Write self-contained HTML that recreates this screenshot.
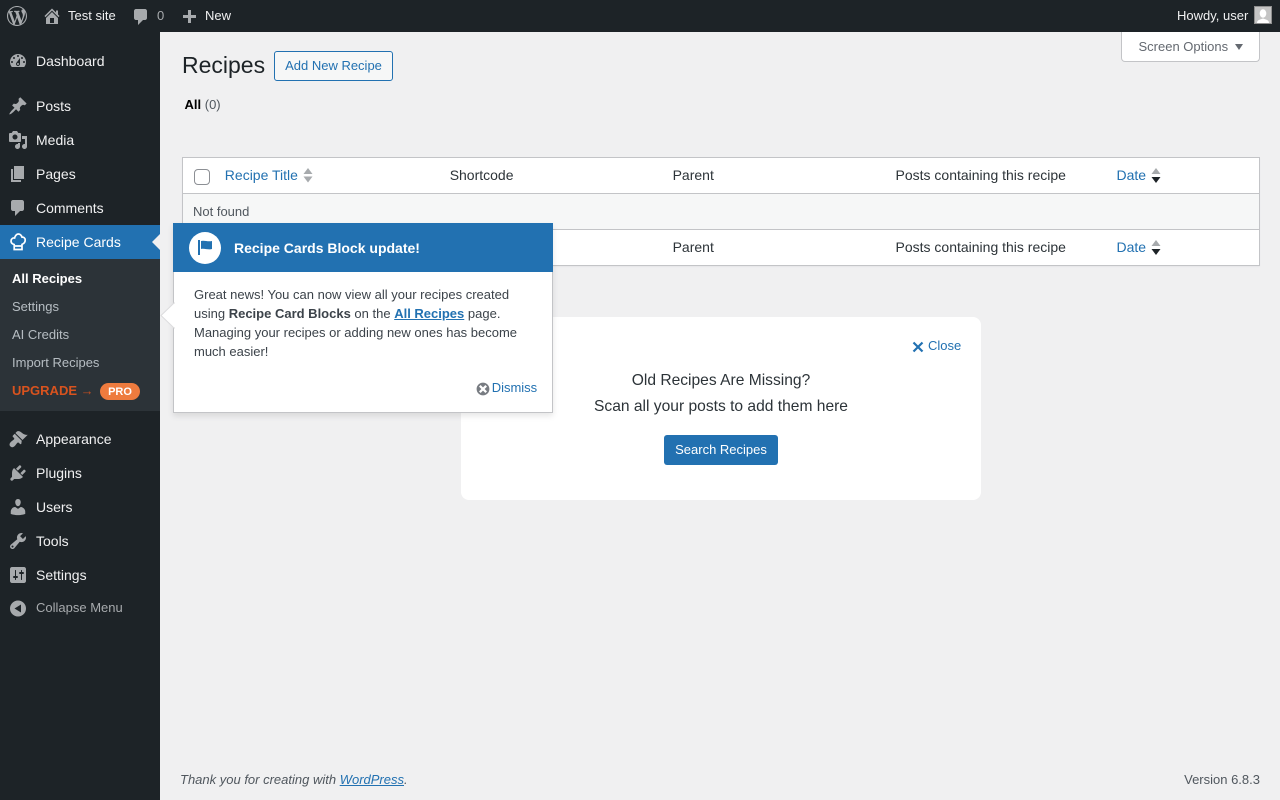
<!DOCTYPE html>
<html>
<head>
<meta charset="utf-8">
<title>Recipes</title>
<style>
html,body{margin:0;padding:0;width:1280px;height:800px;overflow:hidden;background:#f0f0f1;font-family:"Liberation Sans",sans-serif;font-size:13px;color:#3c434a}
*{box-sizing:border-box}
.a{position:absolute;white-space:nowrap}
a{color:#2271b1;text-decoration:none}
#bar{position:absolute;left:0;top:0;width:1280px;height:32px;background:#1d2327}
#side{position:absolute;left:0;top:32px;width:160px;height:768px;background:#1d2327}
.bt{font-size:13px;line-height:32px;top:0;color:#f0f0f1}
.m{font-size:14px;line-height:34px;height:34px;left:36px;color:#f0f0f1}
.s{font-size:13px;line-height:20px;left:12px;color:rgba(240,246,252,.7)}
svg{position:absolute;display:block}
.ic{fill:#a7aaad}
.th{font-size:14px;line-height:20px;color:#2c3338}
</style>
</head>
<body>
<div id="bar"></div>
<!-- WP logo -->
<svg style="left:7px;top:6px" width="20" height="20" viewBox="0 0 20 20"><path class="ic" d="M20 10c0-5.510-4.490-10-10-10C4.480 0 0 4.490 0 10c0 5.520 4.480 10 10 10 5.510 0 10-4.480 10-10zM7.780 15.370L4.370 6.220c.55-.02 1.170-.08 1.170-.08.5-.06.44-1.130-.06-1.110 0 0-1.450.11-2.370.11-.18 0-.37 0-.58-.01C4.120 2.690 6.890 1.050 10 1.050c2.320 0 4.430.87 6.030 2.340-.68-.11-1.650.39-1.650 1.580 0 .74.45 1.360.9 2.100.35.610.55 1.360.55 2.460 0 1.490-1.400 5-1.400 5l-3.030-8.370c.54-.02.82-.17.82-.17.5-.05.44-1.250-.06-1.220 0 0-1.440.12-2.380.12-.87 0-2.330-.12-2.330-.12-.5-.03-.56 1.200-.06 1.220l.92.080 1.260 3.410zM17.410 10c.24-.64.740-1.870.43-4.250.7 1.290 1.050 2.710 1.050 4.250 0 3.290-1.730 6.240-4.480 7.820.99-2.650 1.990-5.180 3-7.820zM6.100 18.090C3.120 16.650 1.110 13.530 1.110 10c0-1.300.23-2.480.72-3.590C3.250 10.300 4.670 14.200 6.100 18.090zm4.030-6.630l2.580 6.980c-.86.290-1.760.450-2.710.450-.79 0-1.570-.11-2.290-.33.810-2.360 1.630-4.720 2.420-7.100z"/></svg>
<!-- home -->
<svg style="left:42px;top:6px" width="20" height="20" viewBox="0 0 20 20"><path class="ic" d="M16 8.500l1.530 1.530-1.060 1.060L10 4.620l-6.470 6.470-1.060-1.060L10 2.500l4 4v-2h2v4zm-6-2.460l6 5.990V18H4v-5.970zM12 17v-5H8v5h4z"/></svg>
<div class="a bt" style="left:68px">Test site</div>
<!-- comment -->
<svg style="left:131px;top:7px" width="20" height="20" viewBox="0 0 20 20"><path class="ic" d="M5 2h9c1.100 0 2 .9 2 2v7c0 1.100-.9 2-2 2h-2l-5 5v-5H5c-1.100 0-2-.9-2-2V4c0-1.100.9-2 2-2z"/></svg>
<div class="a bt" style="left:157px;color:#a7aaad">0</div>
<!-- plus -->
<svg style="left:179px;top:8px" width="20" height="20" viewBox="0 0 20 20"><path class="ic" d="M17 7v3h-5v5H9v-5H4V7h5V2h3v5h5z"/></svg>
<div class="a bt" style="left:205px">New</div>
<div class="a bt" style="left:1177px">Howdy, user</div>
<div class="a" style="left:1254px;top:6px;width:18px;height:18px;background:#c4c4c4;border:1px solid #8f8f8f;overflow:hidden">
<svg style="left:0;top:0" width="16" height="16" viewBox="0 0 16 16"><ellipse cx="8" cy="6.500" rx="3.300" ry="4.200" fill="#fff"/><path d="M2 16c0-3 3-3.500 6-4.500 3 1 6 1.500 6 4.500z" fill="#fff"/></svg>
</div>

<div id="side"></div>
<div class="a" style="left:0;top:225px;width:160px;height:34px;background:#2271b1"></div>
<div class="a" style="left:152px;top:234px;width:0;height:0;border:8px solid transparent;border-left:0;border-right-color:#f0f0f1"></div>
<div class="a" style="left:0;top:259px;width:160px;height:152px;background:#2c3338"></div>

<!-- menu icons -->
<svg style="left:8px;top:51px" width="20" height="20" viewBox="0 0 20 20"><path class="ic" d="M3.760 16h12.480c1.100-1.370 1.760-3.110 1.760-5 0-4.420-3.580-8-8-8s-8 3.580-8 8c0 1.890.66 3.630 1.760 5zM10 4c.55 0 1 .45 1 1s-.45 1-1 1-1-.45-1-1 .45-1 1-1zM6 6c.55 0 1 .45 1 1s-.45 1-1 1-1-.45-1-1 .45-1 1-1zm8 0c.55 0 1 .45 1 1s-.45 1-1 1-1-.45-1-1 .45-1 1-1zm-5.370 5.550L12 7v6c0 1.100-.9 2-2 2s-2-.9-2-2c0-.57.24-1.080.63-1.450zM4 10c.55 0 1 .45 1 1s-.45 1-1 1-1-.45-1-1 .45-1 1-1zm12 0c.55 0 1 .45 1 1s-.45 1-1 1-1-.45-1-1 .45-1 1-1zm-5 3c0-.55-.45-1-1-1s-1 .45-1 1 .45 1 1 1 1-.45 1-1z"/></svg>
<div class="a m" style="top:44px">Dashboard</div>

<svg style="left:8px;top:96px" width="20" height="20" viewBox="0 0 20 20"><path class="ic" d="M10.440 3.020l1.820-1.820 6.360 6.350-1.830 1.820c-1.050-.68-2.480-.57-3.410.36l-.75.750c-.92.930-1.040 2.350-.35 3.400l-1.830 1.820-2.410-2.410-2.800 2.790c-.42.420-3.380 2.710-3.800 2.290s1.860-3.390 2.280-3.810l2.790-2.790L4.100 9.360l1.830-1.820c1.050.69 2.480.570 3.400-.36l.75-.75c.93-.92 1.050-2.350.36-3.410z"/></svg>
<div class="a m" style="top:89px">Posts</div>

<svg style="left:8px;top:130px" width="20" height="20" viewBox="0 0 20 20"><path class="ic" d="M13 11V4c0-.55-.45-1-1-1h-1.670L9 1H5L3.670 3H2c-.55 0-1 .45-1 1v7c0 .55.45 1 1 1h10c.55 0 1-.45 1-1zM7 4.500c1.380 0 2.500 1.120 2.500 2.500S8.380 9.500 7 9.500 4.500 8.380 4.500 7 5.620 4.500 7 4.500zM14 6h5v10.500c0 1.380-1.120 2.500-2.500 2.500S14 17.880 14 16.500s1.120-2.500 2.500-2.500c.17 0 .34.020.5.050V9h-3V6zm-4 8.050V13h2v3.500c0 1.380-1.120 2.500-2.500 2.500S7 17.880 7 16.500 8.120 14 9.500 14c.17 0 .34.020.5.050z"/></svg>
<div class="a m" style="top:123px">Media</div>

<svg style="left:8px;top:164px" width="20" height="20" viewBox="0 0 20 20"><path class="ic" d="M6 15V2h10v13H6zm-1 1h8v2H3V5h2v11z"/></svg>
<div class="a m" style="top:157px">Pages</div>

<svg style="left:8px;top:198px" width="20" height="20" viewBox="0 0 20 20"><path class="ic" d="M5 2h9c1.100 0 2 .9 2 2v7c0 1.100-.9 2-2 2h-2l-5 5v-5H5c-1.100 0-2-.9-2-2V4c0-1.100.9-2 2-2z"/></svg>
<div class="a m" style="top:191px">Comments</div>

<!-- chef hat -->
<svg style="left:8px;top:232px" width="20" height="20" viewBox="0 0 20 20"><path d="M6.200 12.600C3.900 11.800 2.700 10.300 3.100 8.400 3.500 6.600 5 5.700 6.600 6 7.100 3.800 8.600 2 10.200 2s3.100 1 3.800 3.200c1.700-.3 3.100.9 3.200 2.700.1 2-1.100 3.600-3.200 4.500V17.500H6.200zM6.200 14h7.800" fill="none" stroke="#fff" stroke-width="1.700"/></svg>
<div class="a m" style="top:225px;color:#fff">Recipe Cards</div>

<div class="a s" style="top:269px;color:#fff;font-weight:700">All Recipes</div>
<div class="a s" style="top:297px">Settings</div>
<div class="a s" style="top:325px">AI Credits</div>
<div class="a s" style="top:353px">Import Recipes</div>
<div class="a s" style="top:381px;color:#d9531e;font-weight:700">UPGRADE <span style="font-weight:400;opacity:.85">→</span></div>
<div class="a" style="left:100px;top:383px;width:40px;height:17px;border-radius:9px;background:#ee7b3e;color:#fff;font-size:11px;font-weight:700;line-height:18px;text-align:center">PRO</div>

<svg style="left:8px;top:429px" width="20" height="20" viewBox="0 0 20 20"><path class="ic" d="M14.480 11.060L7.410 3.990l1.500-1.500c.5-.56 2.300-.47 3.510.32 1.210.800 1.430 1.280 2.910 2.100 1.180.640 2.450 1.260 4.450.850zm-.71.710L6.700 4.700 4.930 6.470c-.39.390-.39 1.020 0 1.410l1.060 1.060c.39.390.39 1.030 0 1.420-.6.600-1.430 1.150-2.210 1.770-.59.470-1.150.980-1.590 1.620-.22.330-.41.680-.52 1.050-.12.380-.16.780-.1 1.180.05.280.16.530.3.760.14.230.31.450.51.650.2.2.42.370.65.510.23.140.48.250.76.300.4.060.8.020 1.180-.1.370-.11.720-.3 1.050-.52.640-.44 1.150-1 1.620-1.590.62-.78 1.170-1.610 1.770-2.210.39-.39 1.030-.39 1.420 0l1.060 1.060c.39.390 1.020.39 1.410 0z"/></svg>
<div class="a m" style="top:422px">Appearance</div>

<svg style="left:8px;top:463px" width="20" height="20" viewBox="0 0 20 20"><path class="ic" d="M13.110 4.360L9.870 7.600 8 5.730l3.240-3.240c.35-.34 1.050-.2 1.560.32.520.510.660 1.210.31 1.550zm-8 1.770l.91-1.120 9.010 9.010-1.190.84c-.71.710-2.630 1.160-3.820 1.160H6.140L4.900 17.260c-.59.590-1.540.590-2.120 0-.59-.580-.59-1.530 0-2.120l1.240-1.240v-3.880c0-1.130.4-3.190 1.090-3.890zm7.260 3.970l3.240-3.240c.34-.35 1.040-.21 1.550.31.520.510.660 1.210.31 1.550l-3.240 3.250z"/></svg>
<div class="a m" style="top:456px">Plugins</div>

<svg style="left:8px;top:497px" width="20" height="20" viewBox="0 0 20 20"><path class="ic" d="M10 9.250c-2.270 0-2.730-3.440-2.730-3.440C7 4.020 7.820 2 9.970 2c2.160 0 2.980 2.020 2.710 3.810 0 0-.41 3.440-2.680 3.440zm0 2.570L12.720 10c2.390 0 4.520 2.330 4.520 4.530v2.490s-3.650 1.130-7.240 1.130c-3.650 0-7.240-1.130-7.240-1.130v-2.490c0-2.250 1.940-4.480 4.470-4.480z"/></svg>
<div class="a m" style="top:490px">Users</div>

<svg style="left:8px;top:531px" width="20" height="20" viewBox="0 0 20 20"><path class="ic" d="M16.680 9.770c-1.340 1.340-3.300 1.670-4.950.99l-5.410 6.520c-.99.990-2.590.990-3.570 0-.99-.98-.99-2.580 0-3.570l6.520-5.420c-.68-1.650-.35-3.610.99-4.950 1.280-1.280 3.120-1.620 4.720-1.060l-2.890 2.890 2.820 2.820 2.860-2.870c.53 1.580.18 3.480-1.090 4.650zM3.810 16.210c.4.390 1.040.39 1.430 0 .4-.4.4-1.040 0-1.430-.39-.4-1.030-.4-1.430 0-.39.39-.39 1.030 0 1.430z"/></svg>
<div class="a m" style="top:524px">Tools</div>

<svg style="left:8px;top:565px" width="20" height="20" viewBox="0 0 20 20"><path class="ic" d="M18 16V4c0-1.100-.9-2-2-2H4c-1.100 0-2 .9-2 2v12c0 1.100.9 2 2 2h12c1.100 0 2-.9 2-2zM8 11h1c.55 0 1 .45 1 1s-.45 1-1 1H8v1.500c0 .28-.22.5-.5.5s-.5-.22-.5-.5V13H6c-.55 0-1-.45-1-1s.45-1 1-1h1V5.500c0-.28.22-.5.5-.5s.5.220.5.5V11zm5-2h-1c-.55 0-1-.45-1-1s.45-1 1-1h1V5.500c0-.28.22-.5.5-.5s.5.220.5.5V7h1c.55 0 1 .45 1 1s-.45 1-1 1h-1v5.500c0 .28-.22.5-.5.5s-.5-.22-.5-.5V9z"/></svg>
<div class="a m" style="top:558px">Settings</div>

<svg style="left:8px;top:598px" width="20" height="20" viewBox="0 0 20 20"><path class="ic" fill-rule="evenodd" d="M10 2.500a8 8 0 1 1 0 16 8 8 0 0 1 0-16zM13 6.500l-6.500 4 6.500 4z"/></svg>
<div class="a" style="left:36px;top:598px;font-size:13px;line-height:20px;color:#a7aaad">Collapse Menu</div>

<!-- Screen options -->
<div class="a" style="left:1121px;top:32px;width:139px;height:30px;background:#fff;border:1px solid #c3c4c7;border-top:0;border-radius:0 0 4px 4px;font-size:13px;line-height:29px;color:#646970;padding-left:16.500px">Screen Options</div>
<div class="a" style="left:1234.500px;top:44px;width:0;height:0;border:4.500px solid transparent;border-top:6px solid #646970;border-bottom:0"></div>

<!-- Heading -->
<div class="a" style="left:182px;top:50px;font-size:23px;line-height:30px;color:#1d2327">Recipes</div>
<div class="a" style="left:274px;top:51px;width:119px;height:30px;border:1px solid #2271b1;border-radius:3px;background:#f6f7f7;color:#2271b1;font-size:13px;line-height:28px;text-align:center">Add New Recipe</div>
<div class="a" style="left:184.500px;top:95px;font-size:13px;line-height:20px;color:#50575e"><b style="color:#000">All</b> (0)</div>

<!-- Table -->
<div class="a" style="left:182px;top:157px;width:1078px;height:109px;background:#fff;border:1px solid #c3c4c7;box-shadow:0 1px 1px rgba(0,0,0,.04)"></div>
<div class="a" style="left:183px;top:193px;width:1076px;height:1px;background:#c3c4c7"></div>
<div class="a" style="left:183px;top:194px;width:1076px;height:35px;background:#f6f7f7"></div>
<div class="a" style="left:183px;top:229px;width:1076px;height:1px;background:#c3c4c7"></div>
<div class="a" style="left:194px;top:169px;width:16px;height:16px;background:#fff;border:1px solid #8c8f94;border-radius:4px"></div>
<a class="a th" style="left:224.800px;top:165px;color:#2271b1">Recipe Title</a>
<svg style="left:303px;top:167px" width="10" height="17" viewBox="0 0 10 17"><path fill="#a7aaad" d="M5 1l4.500 6H.5zM.5 9.500h9L5 15.500z"/></svg>
<div class="a th" style="left:449.700px;top:165px">Shortcode</div>
<div class="a th" style="left:672.600px;top:165px">Parent</div>
<div class="a th" style="left:895.500px;top:165px">Posts containing this recipe</div>
<a class="a th" style="left:1116.500px;top:165px;color:#2271b1">Date</a>
<svg style="left:1151px;top:167px" width="10" height="17" viewBox="0 0 10 17"><path fill="#a7aaad" d="M5 1l4.500 6H.5z"/><path fill="#1d2327" d="M.5 10h9L5 16z"/></svg>
<div class="a" style="left:193px;top:202px;font-size:13px;line-height:20px;color:#50575e">Not found</div>
<div class="a th" style="left:672.600px;top:237px">Parent</div>
<div class="a th" style="left:895.500px;top:237px">Posts containing this recipe</div>
<a class="a th" style="left:1116.500px;top:237px;color:#2271b1">Date</a>
<svg style="left:1151px;top:239px" width="10" height="17" viewBox="0 0 10 17"><path fill="#a7aaad" d="M5 1l4.500 6H.5z"/><path fill="#1d2327" d="M.5 10h9L5 16z"/></svg>

<!-- Card -->
<div class="a" style="left:461px;top:317px;width:520px;height:183px;background:#fff;border-radius:8px"></div>
<svg style="left:912px;top:341px" width="12" height="12" viewBox="0 0 12 12"><path d="M1.500 1.500l9 9M10.500 1.500l-9 9" stroke="#2271b1" stroke-width="2.200" fill="none"/></svg>
<a class="a" style="left:928px;top:335.500px;font-size:13px;line-height:20px;color:#2271b1">Close</a>
<div class="a" style="left:461px;top:368px;width:520px;text-align:center;font-size:15.600px;line-height:26px;color:#2c3338">Old Recipes Are Missing?<br>Scan all your posts to add them here</div>
<div class="a" style="left:664px;top:435px;width:114px;height:30px;background:#2271b1;border-radius:3px;color:#fff;font-size:13px;line-height:29px;text-align:center">Search Recipes</div>

<!-- Pointer -->
<div class="a" style="left:173px;top:223px;width:380px;height:190px;background:#fff;border:1px solid #c3c4c7;box-shadow:0 3px 6px rgba(0,0,0,.1)"></div>
<svg style="left:160px;top:302px" width="15" height="28" viewBox="0 0 15 28"><path d="M14 1L1 13.500 14 26z" fill="#fff" stroke="#dcdcde"/><path d="M13.500 2v23h1.500V2z" fill="#fff"/></svg>
<div class="a" style="left:173px;top:223px;width:380px;height:49px;background:#2271b1"></div>
<div class="a" style="left:189px;top:232px;width:32px;height:32px;border-radius:50%;background:#fff"></div>
<svg style="left:195px;top:237px" width="20" height="20" viewBox="0 0 20 20"><path fill="#2271b1" d="M5 18V3H3v15h2zm1-6V4c3-1 7 1 11 0v8c-3 1.270-8-1-11 0z"/></svg>
<div class="a" style="left:234px;top:238px;font-size:14px;line-height:20px;font-weight:700;color:#fff">Recipe Cards Block update!</div>
<div class="a" style="left:194px;top:285px;font-size:13px;line-height:19px;color:#3c434a">Great news! You can now view all your recipes created<br>using <b>Recipe Card Blocks</b> on the <a style="font-weight:700;text-decoration:underline;color:#2271b1">All Recipes</a> page.<br>Managing your recipes or adding new ones has become<br>much easier!</div>
<svg style="left:474.800px;top:380.500px" width="16" height="16" viewBox="0 0 20 20"><path fill="#787c82" d="M10 2c4.420 0 8 3.580 8 8s-3.580 8-8 8-8-3.580-8-8 3.580-8 8-8zm5 11l-3-3 3-3-2-2-3 3-3-3-2 2 3 3-3 3 2 2 3-3 3 3z"/></svg>
<a class="a" style="left:491.700px;top:378px;font-size:13px;line-height:20px;color:#2271b1">Dismiss</a>

<!-- Footer -->
<div class="a" style="left:180px;top:770px;font-size:13px;line-height:20px;font-style:italic;color:#50575e">Thank you for creating with <a style="text-decoration:underline;color:#2271b1">WordPress</a>.</div>
<div class="a" style="right:20px;top:770px;font-size:13px;line-height:20px;color:#50575e">Version 6.8.3</div>
</body>
</html>
